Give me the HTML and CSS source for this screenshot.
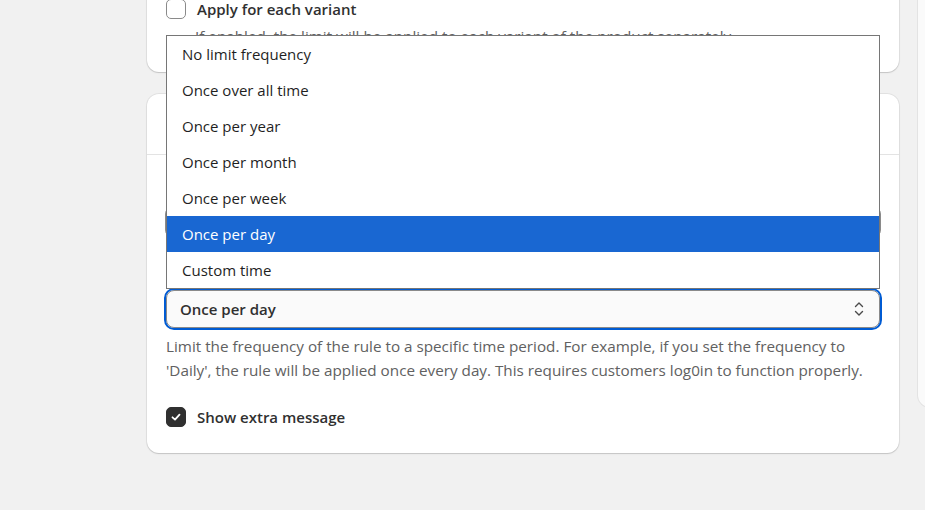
FILE: index.html
```html
<!DOCTYPE html>
<html>
<head>
<meta charset="utf-8">
<link rel="stylesheet" href="styles.css">
</head>
<body>
<div class="page">
  <div class="main">
    <section class="card card-top">
      <label class="check-row">
        <span class="box"></span>
        <span class="check-label strong">Apply for each variant</span>
      </label>
      <p class="help help-top">If enabled, the limit will be applied to each variant of the product separately.</p>
    </section>

    <section class="card card-freq">
      <div class="card-head"></div>
      <div class="card-body">
        <div class="field-ghost"></div>
        <div class="select-wrap">
          <ul class="dropdown">
            <li>No limit frequency</li>
            <li>Once over all time</li>
            <li>Once per year</li>
            <li>Once per month</li>
            <li>Once per week</li>
            <li class="selected">Once per day</li>
            <li>Custom time</li>
          </ul>
          <div class="select">
            <span class="select-value">Once per day</span>
            <svg class="chev" width="12" height="18" viewBox="0 0 12 18" fill="none" stroke="#4a4a4a" stroke-width="1.4" stroke-linecap="round" stroke-linejoin="round">
              <path d="M2.5 6.5 L6 3 L9.5 6.5"/>
              <path d="M2.5 11.5 L6 15 L9.5 11.5"/>
            </svg>
          </div>
        </div>
        <p class="help">Limit the frequency of the rule to a specific time period. For example, if you set the frequency to 'Daily', the rule will be applied once every day. This requires customers log0in to function properly.</p>
        <label class="check-row check-extra">
          <span class="box checked">
            <svg width="12" height="12" viewBox="0 0 12 12" fill="none" stroke="#fff" stroke-width="1.8" stroke-linecap="round" stroke-linejoin="round"><path d="M2.5 6.3 L5 8.6 L9.5 3.6"/></svg>
          </span>
          <span class="check-label medium">Show extra message</span>
        </label>
      </div>
    </section>
  </div>
  <aside class="side"></aside>
</div>
</body>
</html>
```

FILE: styles.css
```css
* { box-sizing: border-box; }
html, body { margin: 0; padding: 0; }
body {
  background: #f1f1f1;
  font-family: "Segoe UI", "Open Sans", "Noto Sans", sans-serif;
  color: #303030;
  overflow: hidden;
  width: 925px;
  height: 510px;
}
.page {
  display: flex;
  gap: 19px;
  padding-left: 147px;
  align-items: flex-start;
}
.main {
  width: 752px;
  flex: none;
  display: flex;
  flex-direction: column;
  gap: 22px;
}
.card {
  background: #fff;
  border-radius: 12px;
  box-shadow: 0 1px 0 rgba(26,26,26,0.07), 0 0 0 1px rgba(0,0,0,0.06), 0 1px 2px rgba(0,0,0,0.08);
}
.card-top {
  margin-top: -40px;
  padding: 39px 19px 16px;
  border-radius: 0 0 12px 12px;
  height: 112px;
  overflow: hidden;
}
.check-row {
  display: flex;
  align-items: center;
  gap: 11px;
  font-size: 15px;
}
.box {
  width: 20px;
  height: 20px;
  border: 1px solid #8a8a8a;
  border-radius: 5px;
  background: #fff;
  display: flex;
  align-items: center;
  justify-content: center;
  flex: none;
}
.box.checked {
  background: #303030;
  border-color: #303030;
}
.check-label { line-height: 20px; color: #303030; }
.strong { font-weight: 600; }
.medium { font-weight: 600; }
.help {
  margin: 0;
  font-size: 15.25px;
  line-height: 24px;
  color: #616161;
}
.help-top { margin-top: 5px; padding-left: 29px; }
.card-freq {
  height: 359px;
}
.card-head {
  height: 61px;
  border-bottom: 1px solid #e3e3e3;
}
.card-body {
  padding: 51px 19px 0 18px;
  display: flex;
  flex-direction: column;
}
.field-ghost {
  height: 32px;
  width: 716px;
  border: 1px solid #8a8a8a;
  border-radius: 8px;
  background: #fdfdfd;
}
.select-wrap {
  position: relative;
  margin-top: 52px;
  margin-left: 1px;
  width: 714px;
}
.dropdown {
  position: absolute;
  left: 0;
  right: 0;
  bottom: 100%;
  margin: 0 0 1px;
  padding: 0;
  list-style: none;
  background: #fff;
  border: 1px solid #767676;
  z-index: 5;
}
.dropdown li {
  height: 36px;
  line-height: 36px;
  padding-left: 15px;
  font-size: 15px;
  color: #1f1f1f;
}
.dropdown li.selected {
  background: #1967d2;
  color: #fff;
}
.select {
  height: 38px;
  border: 1px solid #8a8a8a;
  border-radius: 8px;
  background: #fafafa;
  outline: 2px solid #005bd3;
  outline-offset: 0;
  display: flex;
  align-items: center;
  justify-content: space-between;
  padding: 0 14px 0 13px;
}
.select-value { font-size: 15px; font-weight: 600; color: #303030; }
.chev { display: block; }
.card-body .help { margin-top: 6px; margin-left: 1px; }
.check-extra { margin-top: 25px; margin-left: 1px; }
.side {
  flex: none;
  width: 300px;
  height: 407px;
  background: #fafafa;
  border-radius: 0 0 0 12px;
  box-shadow: 0 0 0 1px #e3e3e3;
}
```
